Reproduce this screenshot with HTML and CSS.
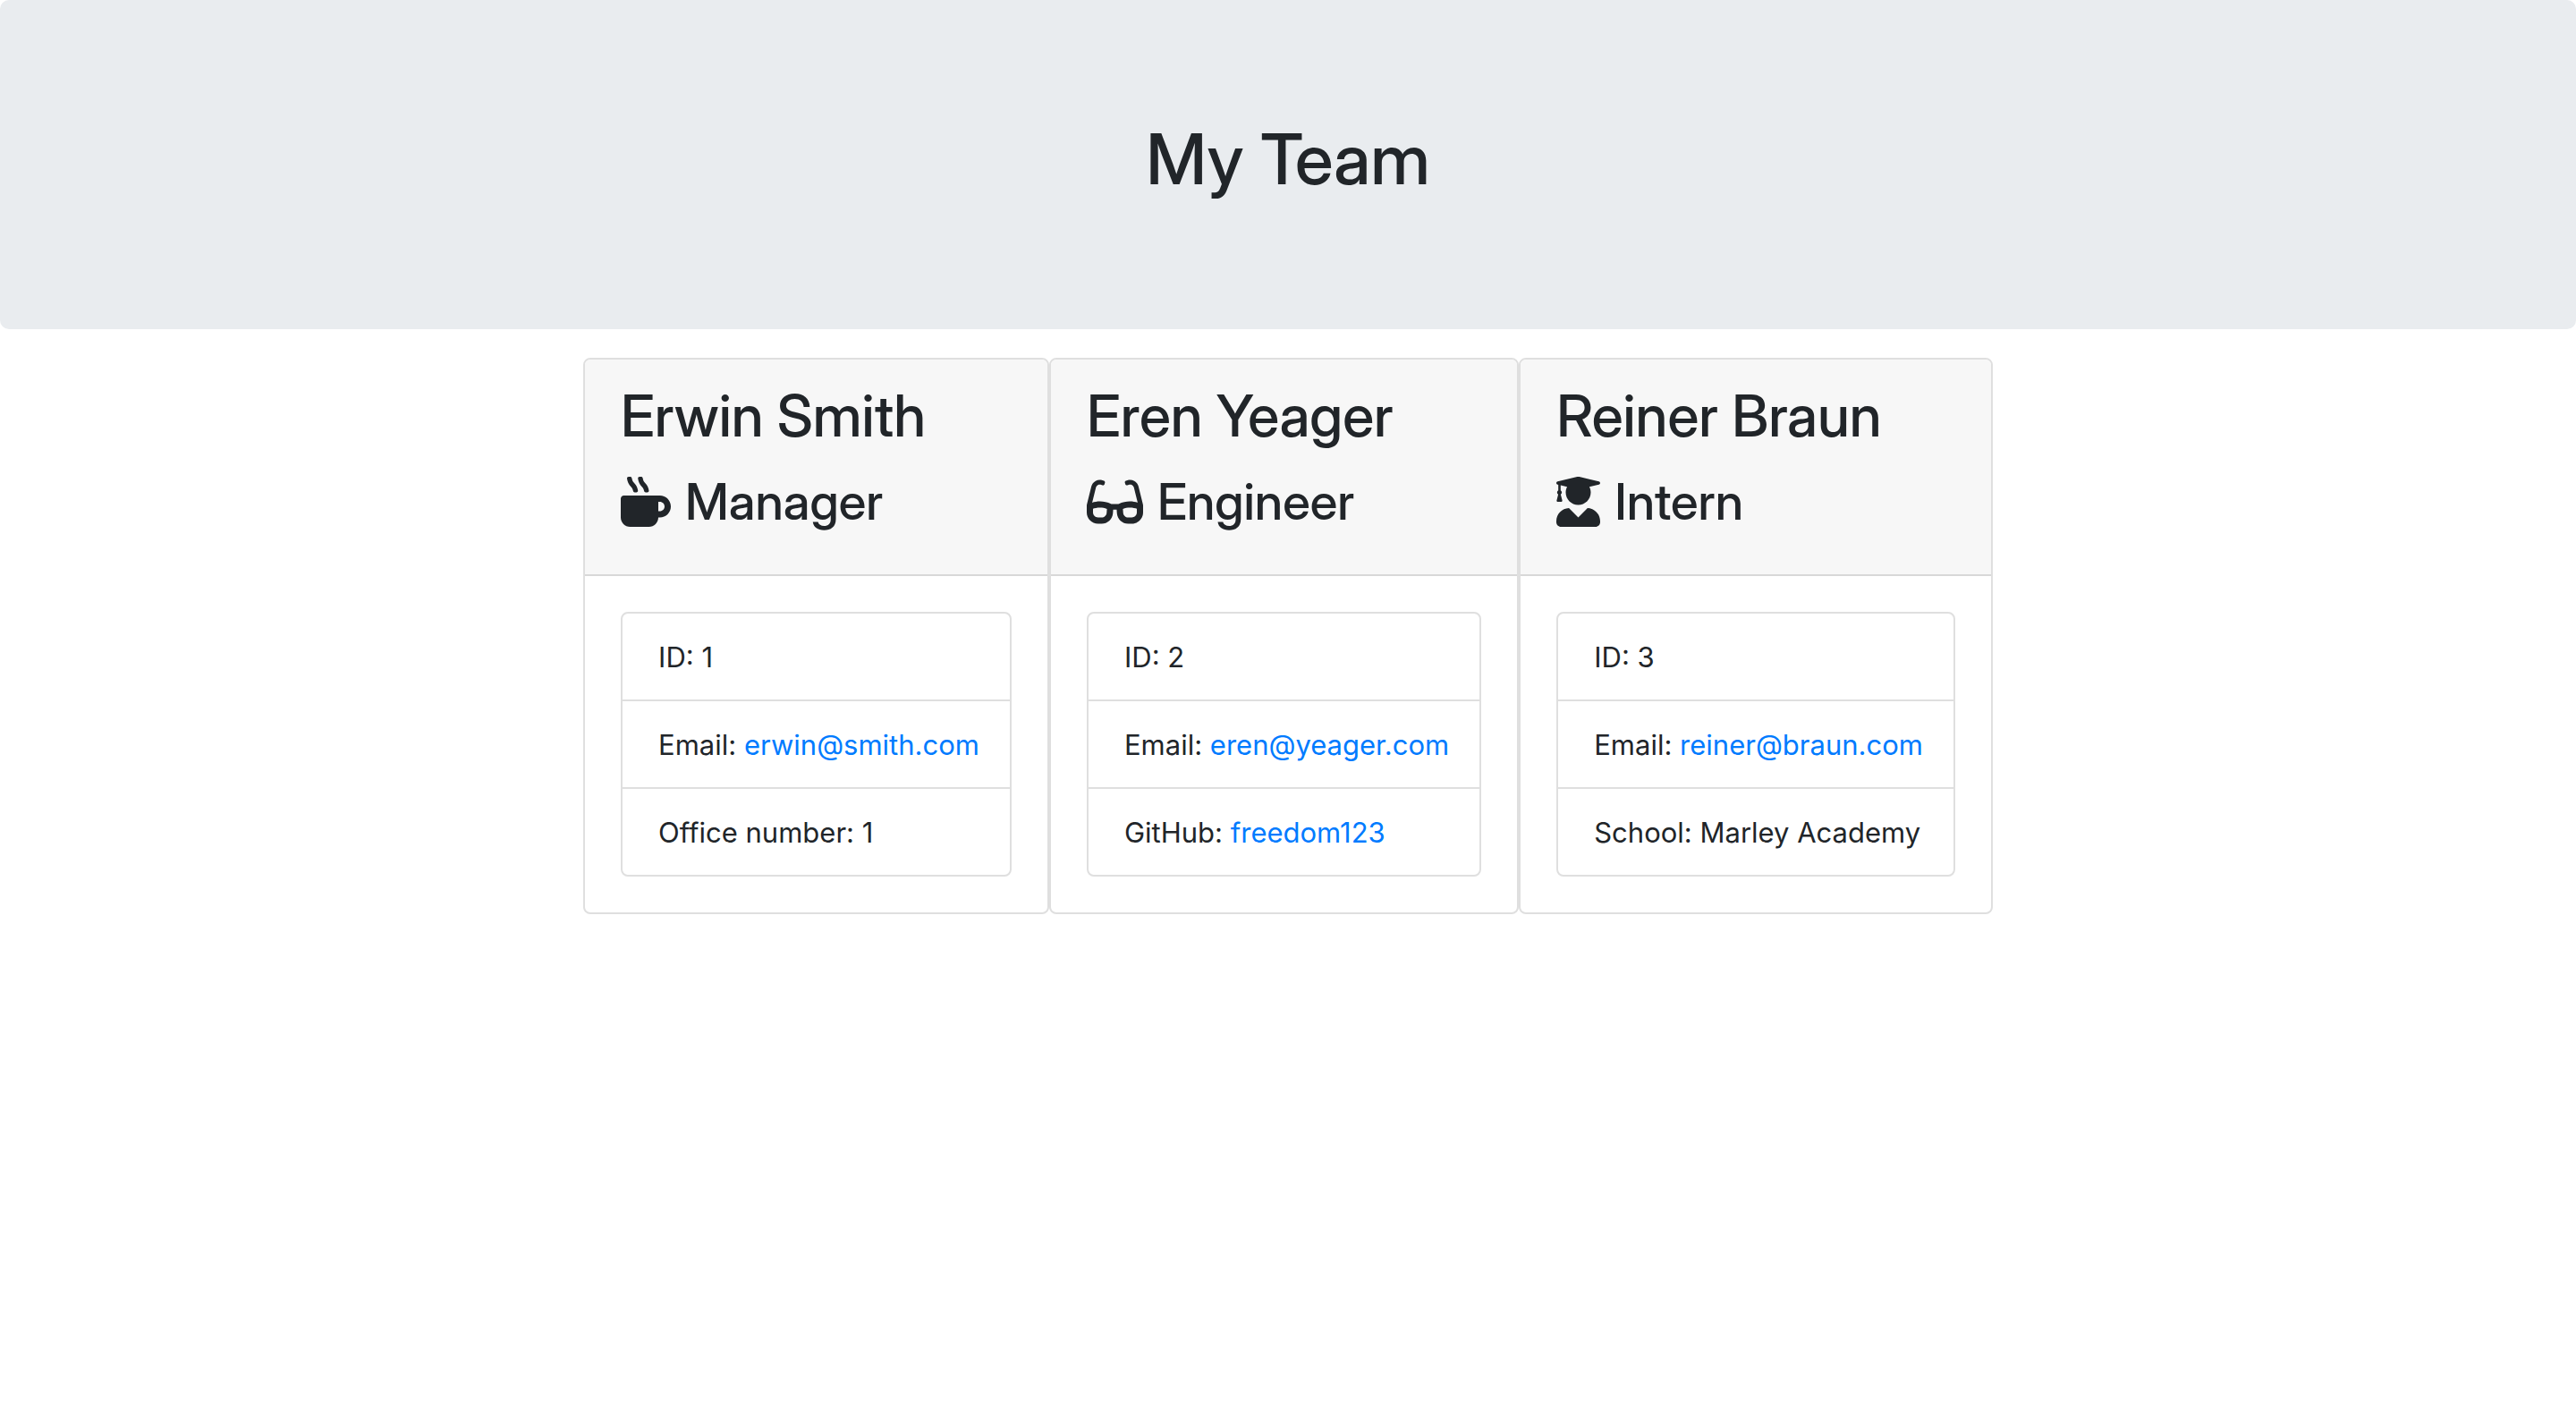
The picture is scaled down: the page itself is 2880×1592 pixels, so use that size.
FILE: index.html
```html
<!DOCTYPE html>
<html lang="en">
<head>
  <meta charset="utf-8">
  <meta name="viewport" content="width=device-width, initial-scale=1">
  <title>My Team</title>
  <link rel="stylesheet" href="styles.css">
</head>
<body>
  <header class="hero">
    <h1 class="hero-title">My Team</h1>
  </header>
  <main class="team">
    <section class="card">
      <div class="card-header">
        <h2 class="name">Erwin Smith</h2>
        <h3 class="role">
          <svg class="icon" viewBox="0 0 512 512" aria-hidden="true"><path d="M127.1 146.5c1.3 7.7 8 13.5 16 13.5h16.5c9.8 0 17.6-8.5 16.3-18-3.8-28.2-16.4-54.2-36.6-74.7-14.4-14.7-23.6-33.3-26.4-53.5C111.8 5.9 105 0 96.8 0H80.4C70.6 0 63 8.5 64.1 18c3.9 31.9 18 61.3 40.6 84.4 12 12.2 19.7 27.5 22.4 44.1zm112 0c1.3 7.7 8 13.5 16 13.5h16.5c9.8 0 17.6-8.5 16.3-18-3.8-28.2-16.4-54.2-36.6-74.7-14.4-14.7-23.6-33.3-26.4-53.5C223.8 5.9 217 0 208.8 0h-16.4c-9.8 0-17.5 8.5-16.3 18 3.9 31.9 18 61.3 40.6 84.4 12 12.2 19.7 27.5 22.4 44.1zM400 192H32c-17.7 0-32 14.3-32 32v192c0 53 43 96 96 96h192c53 0 96-43 96-96h16c61.8 0 112-50.2 112-112s-50.2-112-112-112zm0 160h-16v-96h16c26.5 0 48 21.5 48 48s-21.5 48-48 48z"/></svg>
          Manager
        </h3>
      </div>
      <div class="card-body">
        <ul class="details">
          <li class="detail">ID: 1</li>
          <li class="detail">Email: <a class="link" href="mailto:erwin@smith.com">erwin@smith.com</a></li>
          <li class="detail">Office number: 1</li>
        </ul>
      </div>
    </section>
    <section class="card">
      <div class="card-header">
        <h2 class="name">Eren Yeager</h2>
        <h3 class="role">
          <svg class="icon" viewBox="0 0 576 512" aria-hidden="true"><path fill-rule="evenodd" d="M574.1 280.4l-45.4-181.8c-5.9-23.6-21.6-44-43-55.7-21.5-11.8-47.1-14.2-70.2-6.4l-15.3 5.1c-8.4 2.8-12.9 11.9-10 20.3l5 15.1c2.8 8.4 11.9 12.9 20.3 10.1l13.1-4.4c10.9-3.6 23-3.6 33.2 1.8 10.3 5.4 17.5 14.5 20.4 25.8l38.4 153.9c-22.1-6.9-49.8-12.5-81.1-12.5-34.9 0-74 7-114.9 26.8h-73.2c-40.9-19.7-80-26.7-114.9-26.7-31.4 0-59 5.6-81.1 12.5l38.4-153.9c2.9-11.3 10.1-20.4 20.5-25.8 10.1-5.4 22.2-5.4 33.1-1.8l13.1 4.4c8.4 2.8 17.5-1.8 20.3-10.1l5-15.1c2.8-8.4-1.7-17.5-10.2-20.3l-15.3-5.1c-23.1-7.8-48.7-5.4-70.1 6.4-21.4 11.8-37.1 32.1-43 55.7L1.9 280.4C.6 285.4 0 290.6 0 295.9v70.2C0 429 51.6 480 115.3 480h37.1c60.3 0 110.4-46 114.9-105.4l2.9-38.6h35.7l2.9 38.6C313.3 434 363.4 480 423.6 480h37.1c63.6 0 115.2-51 115.2-113.9v-70.2c.1-5.3-.5-10.4-1.8-15.5zM203.4 369.7c-2 26-24.4 46.3-51 46.3h-37.2C86.8 416 64 393.2 64 366.1v-38.8c14.1-6.2 40.9-11.8 72.4-11.8 24.4 0 46 4.5 70.1 12.5zM512 366.1c0 27.1-22.9 49.9-51.3 49.9h-37.1c-26.6 0-49-20.3-51-46.3l-3.1-41.7c24.1-8 45.6-12.5 70-12.5 31.6 0 58.4 5.6 72.5 11.8z"/></svg>
          Engineer
        </h3>
      </div>
      <div class="card-body">
        <ul class="details">
          <li class="detail">ID: 2</li>
          <li class="detail">Email: <a class="link" href="mailto:eren@yeager.com">eren@yeager.com</a></li>
          <li class="detail">GitHub: <a class="link" href="https://github.com/freedom123">freedom123</a></li>
        </ul>
      </div>
    </section>
    <section class="card">
      <div class="card-header">
        <h2 class="name">Reiner Braun</h2>
        <h3 class="role">
          <svg class="icon" viewBox="0 0 448 512" aria-hidden="true"><path d="M319.4 320.6L224 416l-95.4-95.4C57.1 323.7 0 382.2 0 454.4v9.6c0 26.5 21.5 48 48 48h352c26.5 0 48-21.5 48-48v-9.6c0-72.2-57.1-130.7-128.6-133.8zM13.6 79.8l6.4 1.5v58.4c-7 4.2-12 11.5-12 20.3 0 8.4 4.6 15.4 11.1 19.7L3.5 242c-1.7 6.9 2.1 14 7.6 14h41.8c5.5 0 9.3-7.1 7.6-14l-15.6-62.3C51.4 175.4 56 168.4 56 160c0-8.8-5-16.1-12-20.3V87.1l66 15.9c-8.6 17.2-14 36.4-14 57 0 70.7 57.3 128 128 128s128-57.3 128-128c0-20.6-5.3-39.8-14-57l96.3-23.2c18.2-4.4 18.2-27.1 0-31.5l-190.4-46c-13-3.1-26.7-3.1-39.7 0L13.6 48.2c-18.1 4.4-18.1 27.2 0 31.6z"/></svg>
          Intern
        </h3>
      </div>
      <div class="card-body">
        <ul class="details">
          <li class="detail">ID: 3</li>
          <li class="detail">Email: <a class="link" href="mailto:reiner@braun.com">reiner@braun.com</a></li>
          <li class="detail">School: Marley Academy</li>
        </ul>
      </div>
    </section>
  </main>
</body>
</html>
```
FILE: styles.css
```css
* {
  box-sizing: border-box;
}

body {
  margin: 0;
  background: #fff;
  color: #212529;
  font-family: Inter, "Liberation Sans", sans-serif;
  font-size: 31px;
  line-height: 48px;
}

h1,
h2,
h3 {
  margin: 0 0 16px;
  font-family: "Inter Display", Inter, "Liberation Sans", sans-serif;
  font-weight: 500;
}

.hero {
  margin-bottom: 32px;
  padding: 130px 64px 126px;
  border-radius: 10px;
  background: #e9ecef;
  text-align: center;
}

.hero-title {
  font-size: 78px;
  line-height: 96px;
}

.team {
  display: flex;
  flex-wrap: wrap;
  justify-content: center;
}

.card {
  border: 2px solid #dfdfdf;
  border-radius: 8px;
  overflow: hidden;
}

.card-header {
  padding: 24px 40px;
  border-bottom: 2px solid #d8d8d8;
  background: #f7f7f7;
}

.name {
  font-size: 64px;
  line-height: 78px;
}

.role {
  display: flex;
  align-items: center;
  gap: 16px;
  font-size: 56px;
  line-height: 82px;
}

.icon {
  height: 56px;
  fill: currentColor;
}

.card-body {
  padding: 40px;
}

.details {
  margin: 0;
  padding: 0;
  border: 2px solid #dfdfdf;
  border-radius: 8px;
  list-style: none;
}

.detail {
  padding: 25px 34px 23px 40px;
}

.detail + .detail {
  border-top: 2px solid #dfdfdf;
}

.link {
  color: #007bff;
  text-decoration: none;
}
```
